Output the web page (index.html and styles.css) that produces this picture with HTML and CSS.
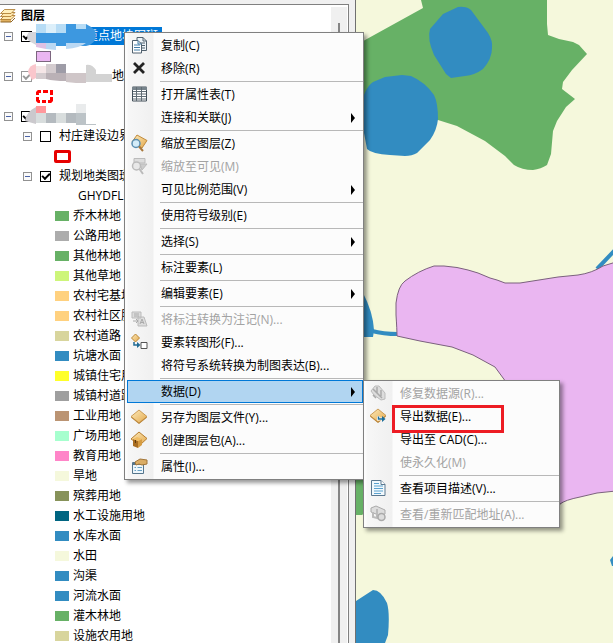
FILE: index.html
```html
<!DOCTYPE html>
<html lang="zh-CN">
<head>
<meta charset="utf-8">
<meta name="viewport" content="width=device-width, initial-scale=1">
<title>图层</title>
<link rel="stylesheet" href="styles.css">
</head>
<body>
<svg class="defs" aria-hidden="true">
  <defs>
    <linearGradient id="gold" x1="0" y1="0" x2="1" y2="1"><stop offset="0" stop-color="#fdebbb"/><stop offset="1" stop-color="#e3a84c"/></linearGradient>
    <symbol id="diamond" viewBox="0 0 18 18"><path d="M9 3 17 9.500 9 16 1 9.500Z" fill="#b07a2c"/><path d="M9 2 17 8.500 9 15 1 8.500Z" fill="url(#gold)" stroke="#c08a3c" stroke-width=".8"/></symbol>
  </defs>
</svg>
<main class="workspace">
  <section class="dock">
    <div class="frame">
      <div class="tree">
        <div class="row root">
          <svg class="layers" viewBox="0 0 16 14"><path d="M0.500 10.500 4.500 6.500H15L11 10.500V13H0.500Z" fill="#e0b060"/><path d="M.5 10.500 4.500 6.500H15L11 10.500Z" fill="#ffe9ae" stroke="#a8752a" stroke-width=".8"/><path d="M.5 7.500 4.500 3.500H15L11 7.500Z" fill="#ffe9ae" stroke="#a8752a" stroke-width=".8"/><path d="M.5 4.500 4.500 .5H15L11 4.500Z" fill="#fff0bd" stroke="#a8752a" stroke-width=".8"/><path d="M.5 13H11L15 9" fill="none" stroke="#8f6424"/></svg>
          <b>图层</b>
        </div>
        <div class="row"><button class="fold" aria-label="折叠"></button><input type="checkbox" checked id="l1"><label class="selected" for="l1">重点地块图斑</label></div>
        <div class="row sym1"><i class="chip violet"></i></div>
        <div class="row"><button class="fold" aria-label="折叠"></button><input class="dim" type="checkbox" checked id="l2"><label class="tail" for="l2">地</label></div>
        <div class="row sym1"><svg class="dash" viewBox="0 0 17 13"><path d="M1.500 5V2.500L2.500 1.500H5M7 1.500H12M14 1.500H15.500V5M15.500 7V10.500L14.500 11.500H12M10 11.500H6M4 11.500H2.500L1.500 10.500V7" fill="none" stroke="#f00" stroke-width="3"/></svg></div>
        <div class="row"><button class="fold" aria-label="折叠"></button><input type="checkbox" checked aria-label="图层组"></div>
        <div class="row level2"><button class="fold" aria-label="折叠"></button><input type="checkbox" id="l4"><label for="l4">村庄建设边界</label></div>
        <div class="row sym2"><i class="outline"></i></div>
        <div class="row level2"><button class="fold" aria-label="折叠"></button><input type="checkbox" checked id="l5"><label for="l5">规划地类图斑</label></div>
        <div class="row field">GHYDFL</div>
        <div class="row class"><i class="c-green"></i>乔木林地</div>
        <div class="row class"><i class="c-road"></i>公路用地</div>
        <div class="row class"><i class="c-green"></i>其他林地</div>
        <div class="row class"><i class="c-grass"></i>其他草地</div>
        <div class="row class"><i class="c-house"></i>农村宅基地</div>
        <div class="row class"><i class="c-house"></i>农村社区服</div>
        <div class="row class"><i class="c-khaki"></i>农村道路</div>
        <div class="row class"><i class="c-water"></i>坑塘水面</div>
        <div class="row class"><i class="c-yellow"></i>城镇住宅用地</div>
        <div class="row class"><i class="c-gray"></i>城镇村道路</div>
        <div class="row class"><i class="c-brown"></i>工业用地</div>
        <div class="row class"><i class="c-mint"></i>广场用地</div>
        <div class="row class"><i class="c-pink"></i>教育用地</div>
        <div class="row class"><i class="c-field"></i>旱地</div>
        <div class="row class"><i class="c-olive"></i>殡葬用地</div>
        <div class="row class"><i class="c-teal"></i>水工设施用地</div>
        <div class="row class"><i class="c-water"></i>水库水面</div>
        <div class="row class"><i class="c-field"></i>水田</div>
        <div class="row class"><i class="c-water"></i>沟渠</div>
        <div class="row class"><i class="c-water"></i>河流水面</div>
        <div class="row class"><i class="c-green"></i>灌木林地</div>
        <div class="row class"><i class="c-khaki"></i>设施农用地</div>
      </div>
      <div class="scrollbar"></div>
    </div>
  </section>
  <section class="map">
    <svg viewBox="356 0 257 643" preserveAspectRatio="xMinYMin slice" role="img" aria-label="地图">
      <path fill="#67b166" d="M356 45 423 8 421 0H547V24L548 35 559 39 573 42 579 45 587 54 572 70 563 82 562 89 575 99 566 107 557 121 553 131 551 154 547 165Q541 169 533 170Q522 170 514 165L505 156 485 141 457 126 438 120 356 130Z"/>
      <path fill="#328cc1" d="M458 7Q466 6 471 10L488 33Q493 41 492 48Q492 59 483 69Q475 75 465 76L451 78 446 74 434 55Q427 39 430 29L443 14Z"/>
      <path fill="#328cc1" d="M360 110Q364 88 373 82L385 77 402 75 411 76Q425 82 434 95Q438 103 438 119Q437 130 430 140L417 153Q412 156 405 156L390 155Q372 154 367 149L364 133Z"/>
      <path fill="none" stroke="#328cc1" stroke-width="4" d="M597 269 616 249M372 331Q383 334 398 334"/>
      <path fill="#328cc1" d="M363 293Q373 312 374 330L373 337H356V290Z"/>
      <path fill="#eab6f1" stroke="#7b617e" d="M397 336Q397 330 396 315V303Q398 286 405 281Q418 271 434 266H444Q458 267 468 270Q477 272 490 278L497 280 505 283H520L558 277 578 275Q592 273 603 266L616 262V491Q596 492 580 497Q565 500 560 504L550 520 506 382 495 367 473 355 452 347 420 341Z"/>
      <path fill="#67b166" d="M356 470H366V512L362 515H356Z"/>
      <path fill="#328cc1" d="M356 601 373 590Q381 590 387 603Q390 613 388 635L385 643H356ZM613 556 610 560 612 566H613Z"/>
    </svg>
  </section>
</main>

<svg class="mosaic" viewBox="0 0 120 110" aria-hidden="true">
  <g transform="translate(0 -20)">
    <path fill="#d5d5da" d="M36 32H29Q25 36 29 41L36 45Z"/>
    <path fill="#3d98e0" d="M36 24H86Q96 29 96 35Q96 44 86 46H36Z"/>
    <path fill="#b7dcf5" d="M36 24H46V33H36ZM56 24H66V33H56ZM76 24H86V29H76Z"/>
    <path fill="#dceffa" d="M46 24H56V33H46Z"/>
    <path fill="#dfc1e3" d="M36 43H46V49L36 47Z"/>
    <path fill="#bad8f3" d="M46 43H56V50L46 49ZM66 43H86Q80 48 66 49Z"/>
    <path fill="#fac6cc" d="M36 64Q29 65 28 72L32 80 36 78Z"/>
    <path fill="#f5e6e7" d="M36 66H46V73H36Z"/><path fill="#d4cccf" d="M46 64H56V73H46ZM36 73H46V79H36Z"/>
    <path fill="#9e9ca7" d="M56 64H66V73H56Z"/><path fill="#bab1b6" d="M46 73H66V81Q54 81 46 79Z"/>
    <path fill="#cfc6c8" d="M66 73H86V83H76L66 82Z"/><path fill="#d3d3d3" d="M86 65Q92 64 96 70V74H112V82H86Z"/>
    <path fill="#ff989c" d="M36 106H46V113H36Z"/><path fill="#cbc9cd" d="M36 107Q26 112 25 121L36 124Z"/>
    <path fill="#d8dddd" d="M36 113H46V123H36ZM56 113H66V123H56Z"/><path fill="#b4babf" d="M46 113H56V123H46ZM66 113H76V123H66Z"/>
    <path fill="#e9ebec" d="M76 104H86V113H76Z"/><path fill="#bcc3c7" d="M76 113H86V124H96V125H76Z"/>
  </g>
</svg>

<nav class="menu main" aria-label="图层菜单">
  <button><svg viewBox="0 0 18 18"><path d="M7 1.500H13L16.500 5V14.500H7Z" fill="#edf4f8" stroke="#51616e"/><path d="M13 1.500V5H16.500M9 7H15M9 9.500H15M9 12H15" fill="none" stroke="#51616e"/><path d="M2.500 4.500H8L11.500 8V17H2.500Z" fill="#fff" stroke="#51616e"/><path d="M8 4.500V8H11.500M4 9H10M4 11.500H10M4 14H10" fill="none" stroke="#407ca8"/></svg>复制(C)</button>
  <button><svg viewBox="0 0 18 18"><path d="M4 4 14 14M14 4 4 14" stroke="#222" stroke-width="2.800"/></svg>移除(R)</button>
  <hr>
  <button><svg viewBox="0 0 18 18"><path d="M2.500 2H16.500V16H2.500Z" fill="#fff" stroke="#424f59"/><path d="M2 3.500H17" stroke="#77838b" stroke-width="3"/><path d="M3 6.500H16M3 9H16M3 11.500H16M3 14H16M6.500 2V16M11.500 2V16" stroke="#606c74"/></svg>打开属性表(T)</button>
  <button class="more">连接和关联(J)</button>
  <hr>
  <button><svg viewBox="0 0 18 18"><path d="M7 1 17 6.500 12 14 2 8Z" fill="url(#gold)" stroke="#c08a3c"/><circle cx="6" cy="9.500" r="4" fill="#d4ecf8" stroke="#5b8eb0" stroke-width="1.500"/><path d="M9 12.500 13 17" stroke="#a8773b" stroke-width="2"/></svg>缩放至图层(Z)</button>
  <button disabled><svg viewBox="0 0 18 18"><path d="M4 1.500H15V6H4Z" fill="#ddd" stroke="#bbb"/><path d="M10 7H17L12 13Z" fill="#ccc" stroke="#bbb"/><circle cx="6.500" cy="9" r="4" fill="#e8e8e8" stroke="#bbb" stroke-width="1.500"/><path d="M9.500 12 13 17" stroke="#bbb" stroke-width="2"/></svg>缩放至可见(M)</button>
  <button class="more">可见比例范围(V)</button>
  <hr>
  <button>使用符号级别(E)</button>
  <hr>
  <button class="more">选择(S)</button>
  <hr>
  <button>标注要素(L)</button>
  <hr>
  <button class="more">编辑要素(E)</button>
  <hr>
  <button disabled><svg viewBox="0 0 18 18"><path d="M2 2H11V8H2ZM8 7H14L17 16H8Z" fill="#ddd" stroke="#bbb"/><path d="M4 4H9M4 6H9M3 11H8M6 9 8 11 6 13M10 14 12 9 14 14M11 12.500H14" fill="none" stroke="#aaa"/></svg>将标注转换为注记(N)...</button>
  <button><svg viewBox="0 0 18 18"><path d="M5.500 1 9.500 5 5.500 9 1.500 5Z" fill="url(#gold)" stroke="#bc8735"/><path d="M4 9V12H8" fill="none" stroke="#226b94" stroke-width="1.500"/><path d="M7 9 10.500 12 7 15Z" fill="#226b94"/><path d="M11 9.500H17V15.500H11Z" fill="#fff" stroke="#555"/></svg>要素转图形(F)...</button>
  <button>将符号系统转换为制图表达(B)...</button>
  <hr>
  <button class="more active" aria-expanded="true">数据(D)</button>
  <hr>
  <button><svg><use href="#diamond"/></svg>另存为图层文件(Y)...</button>
  <button><svg viewBox="0 0 18 18"><path d="M9 1 17 7.500 10 14 1 8Z" fill="url(#gold)" stroke="#b67d2d"/><path d="M3 8 8 10V17L3 15Z" fill="#a86c20"/><path d="M8 10 12 8V14L8 17Z" fill="#d59b42"/><path d="M3 8 7 6 12 8 8 10Z" fill="#f0bd65"/><path d="M5.500 9V12" stroke="#5c3b10"/></svg>创建图层包(A)...</button>
  <hr>
  <button><svg viewBox="0 0 18 18"><path d="M2.500 5.500H13.500V16.500H2.500Z" fill="#edf6fb" stroke="#55758c"/><path d="M3 7H13" stroke="#55758c" stroke-width="2"/><path d="M4.500 10.500H6M7.500 10.500H12M4.500 13.500H6M7.500 13.500H12" stroke="#66a0c5"/><path d="M5 5 10 2 17 3V7L12 8 9 7 6 8Z" fill="#d9ac65" stroke="#a2763a"/></svg>属性(I)...</button>
</nav>

<nav class="menu sub" aria-label="数据">
  <button disabled><svg viewBox="0 0 18 18"><path d="M2 7 6 2H10L16 9V15L12 16 5 11Z" fill="#ddd" stroke="#bbb"/><path d="M4 5 13 14M8 3 8 9M12 6V12M4 11 7 14" stroke="#aaa" stroke-width="1.500"/></svg>修复数据源(R)...</button>
  <button class="marked"><svg viewBox="0 0 18 18"><use href="#diamond"/><path d="M9.500 9.500V12H14" fill="none" stroke="#fff" stroke-width="3"/><path d="M9.500 9.500V12H14" fill="none" stroke="#1b6d99" stroke-width="1.500"/><path d="M13 9 16.500 12 13 15Z" fill="#1b6d99"/></svg>导出数据(E)...</button>
  <button>导出至 CAD(C)...</button>
  <button disabled>使永久化(M)</button>
  <hr>
  <button><svg viewBox="0 0 18 18"><path d="M2.500 1.500H12L16 5.500V16.500H2.500Z" fill="#f2f9fd" stroke="#5b7890"/><path d="M12 1.500V5.500H16" fill="#fff" stroke="#5b7890"/><path d="M5 4.500H10M5 7H14M5 9.500H14M5 12H14M5 14.500H12" stroke="#5ba2cf"/></svg>查看项目描述(V)...</button>
  <hr>
  <button disabled><svg viewBox="0 0 18 18"><path d="M2 3 7 1 16 5V9L12 11 2 7Z" fill="#ddd" stroke="#aaa"/><path d="M4 7V12L8 13V9M8 4V9" fill="none" stroke="#bbb" stroke-width="2"/><circle cx="12.500" cy="12" r="3.500" fill="#ddd" stroke="#aaa" stroke-width="1.500"/></svg>查看/重新匹配地址(A)...</button>
</nav>
</body>
</html>
```
FILE: styles.css
```css
*, ::before, ::after { box-sizing: border-box; }
body {
  margin: 0;
  color: #000;
  background: #f0f0f0;
  font: 12px/20px "Open Sans", "Noto Sans CJK SC", sans-serif;
}
button { font: inherit; color: inherit; }
.defs { position: absolute; width: 0; height: 0; }

.workspace { display: flex; height: 100vh; min-height: 643px; overflow: hidden; }
.dock {
  flex: 0 0 356px;
  padding: 4px 6px 0 0;
  border-right: 1px solid #707070;
}
.frame {
  display: flex;
  height: 100%;
  border: solid #808080;
  border-width: 1px 1px 0 0;
  background: #fff;
}
.tree { flex: 1; padding-top: 1px; overflow: hidden; }
.scrollbar {
  flex: 0 0 16px;
  margin: 2px 1px 0 0;
  background: linear-gradient(#858585, #858585) 7px 16px / 2px 100% no-repeat #f0f0f0;
}

.row { display: flex; align-items: center; height: 20px; padding-left: 4px; white-space: nowrap; }
.root { padding-left: 0; gap: 5px; }
.layers { width: 16px; height: 14px; }
.level2 { padding-left: 23px; }
.fold {
  width: 9px;
  height: 9px;
  padding: 0;
  border: 1px solid #919191;
  background: linear-gradient(#4b63a7, #4b63a7) center / 5px 1px no-repeat #fafafa;
}
input {
  appearance: none;
  width: 11px;
  height: 11px;
  margin: 0 8px;
  border: 1px solid #000;
  background: #fff;
}
input:checked::before {
  content: "";
  display: block;
  width: 8px;
  height: 5px;
  margin: 1px 0 0 1px;
  border: solid #000;
  border-width: 0 0 2px 2px;
  transform: rotate(-45deg);
}
input.dim, input.dim:checked::before { border-color: #999; }
.selected { margin-left: 46px; padding-right: 4px; line-height: 18px; color: #fff; background: #0078d7; }
.tail { margin-left: 72px; }
.sym1 { padding-left: 36px; }
.sym2 { padding-left: 54px; }
.chip { width: 15px; height: 11px; border: 1px solid #7c667f; }
.violet { background: #eab6f1; }
.dash { width: 17px; height: 13px; }
.outline { width: 17px; height: 13px; border: 3px solid #e60000; border-radius: 2px; }
.field { padding-left: 78px; }
.class { padding-left: 55px; gap: 4px; }
.class i { width: 14px; height: 10px; }
.c-green { background: #67b166; }
.c-road { background: #acacac; }
.c-grass { background: #cdf57a; }
.c-house { background: #ffd17f; }
.c-khaki { background: #d8d59d; }
.c-water { background: #328cc1; }
.c-yellow { background: #ffff29; }
.c-gray { background: #9f9f9f; }
.c-brown { background: #bb9473; }
.c-mint { background: #a6ffce; }
.c-pink { background: #ff85c8; }
.c-field { background: #f5f8dc; }
.c-olive { background: #87925a; }
.c-teal { background: #006581; }

.map { flex: 1; background: #f5f8dc; }
.map svg { display: block; width: 100%; height: 100%; }
.mosaic { position: absolute; left: 0; top: 20px; width: 120px; height: 110px; }

.menu {
  position: absolute;
  padding: 1px 0 1px 2px;
  border: 1px solid #808080;
  background: linear-gradient(90deg, #fcfcfc 2px, #f7f7f7 3px, #f0f0f0 28px, #fcfcfc 29px);
  box-shadow: 3px 3px 4px rgba(0, 0, 0, .4);
}
.main { left: 124px; top: 32px; width: 240px; }
.sub { left: 363px; top: 380px; width: 197px; }
.menu button {
  position: relative;
  display: flex;
  align-items: center;
  width: 100%;
  height: 23px;
  padding: 0 0 0 34px;
  border: 0;
  background: none;
  text-align: left;
  white-space: nowrap;
}
.menu button:disabled { color: #a3a3a3; }
.menu button svg { position: absolute; left: 3px; top: 2px; width: 18px; height: 18px; }
.menu hr { height: 1px; margin: 1px 0 1px 33px; border: 0; background: #b8b8b8; }
.menu .more::after {
  content: "";
  margin: 0 8px 0 auto;
  border: solid transparent;
  border-width: 5px 0 5px 4px;
  border-left-color: #000;
}
.menu .active { background: #b1d5f1; box-shadow: inset 0 0 0 1px #0078d7; }
.marked::after {
  content: "";
  position: absolute;
  left: 26px;
  top: 0;
  width: 112px;
  height: 28px;
  border: 3px solid #ed1c24;
}
```
